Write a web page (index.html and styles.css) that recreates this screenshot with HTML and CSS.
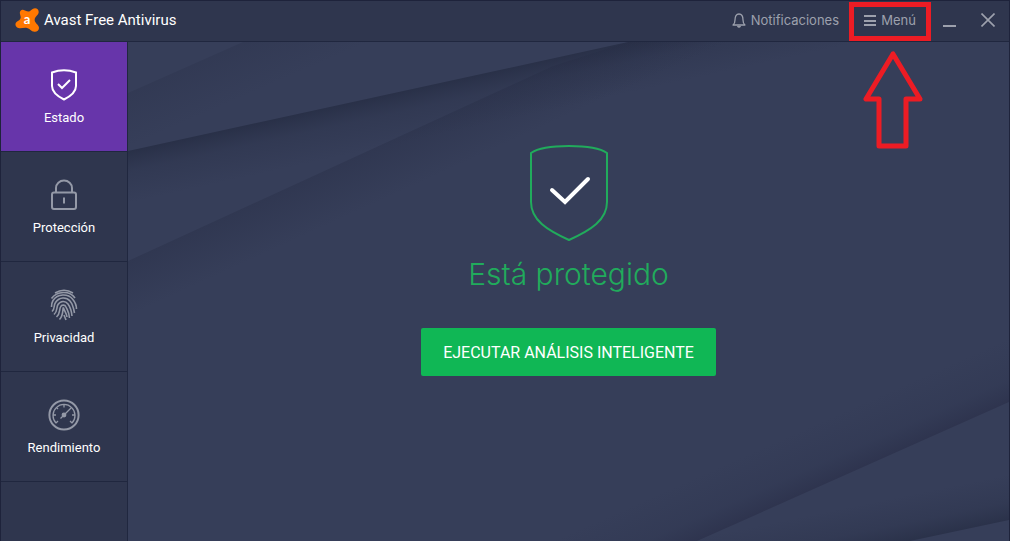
FILE: index.html
```html
<!DOCTYPE html>
<html lang="es">

<head>
  <meta charset="UTF-8">
  <meta name="viewport" content="width=device-width, initial-scale=1.0">
  <title>Avast Free Antivirus</title>
  <link rel="stylesheet" href="styles.css">
</head>

<body>
  <div class="window">
    <header class="titlebar">
      <svg class="logo" viewBox="0 0 24 24" aria-hidden="true">
        <path fill="#ff7800" d="M8 1.800C10 2.200 11.500 3.600 14 3.400C16 3.200 17 .3 20 .3C23.300 .3 24.800 4 22.800 6.400C20.500 9 19.200 10.500 19.800 13C20.300 15.300 24 16.800 24 20C24 22.300 21.600 24.200 19.400 23.800C16 23.300 15 20.600 12 19.900C9 19.300 6 20.800 3.400 20C.3 19-.4 15.800 1.500 14C3.300 12.500 5.600 12 5.700 9.500C5.800 7.500 4.600 6.200 4.900 4.300C5.200 2.600 6.500 1.500 8 1.800Z"/>
        <text class="logo-letter" x="12" y="15.500" text-anchor="middle">a</text>
      </svg>
      <span class="app-name">Avast Free Antivirus</span>

      <div class="title-actions">
        <button type="button" class="title-btn">
          <svg width="14" height="16" viewBox="0 0 14 16" fill="none" stroke="currentColor" stroke-linejoin="round" aria-hidden="true">
            <path d="M1 13C2.500 12 3 10.500 3 8C3 4.500 4.300 2 7 2S11 4.500 11 8C11 10.500 11.500 12 13 13Z" stroke-width="1.300"/>
            <path d="M5.500 14Q7 16 8.500 14" stroke-width="1.300"/>
          </svg>
          Notificaciones
        </button>
        <button type="button" class="title-btn menu-btn">
          <svg width="12" height="12" viewBox="0 0 12 12" stroke="currentColor" stroke-width="2" aria-hidden="true">
            <path d="M0 2H12M0 7H12M0 11H12"/>
          </svg>
          Menú
          <svg class="arrow" viewBox="0 0 60 99" fill="none" stroke="#ed1c24" stroke-width="5" stroke-linejoin="round" aria-hidden="true">
            <path d="M30 3L3 48H16V95H43V48H57Z"/>
          </svg>
        </button>
        <button type="button" class="title-btn min-btn" aria-label="Minimizar">
          <svg width="13" height="14" viewBox="0 0 13 14" stroke="currentColor" stroke-width="2" aria-hidden="true">
            <path d="M0 13H13"/>
          </svg>
        </button>
        <button type="button" class="title-btn close-btn" aria-label="Cerrar">
          <svg width="14" height="14" viewBox="0 0 14 14" stroke="currentColor" stroke-width="1.600" aria-hidden="true">
            <path d="M.5 .5L13.500 13.500M13.500 .5L.5 13.500"/>
          </svg>
        </button>
      </div>
    </header>

    <div class="layout">
      <nav class="sidebar">
        <a href="#estado" class="nav-item active">
          <svg class="nav-icon" viewBox="0 0 32 32" aria-hidden="true">
            <path d="M4 3.500Q16 -1 28 3.500V17C28 23.500 22 27.500 16 30.500C10 27.500 4 23.500 4 17Z"/>
            <path d="M10 15L14 19L22 11"/>
          </svg>
          Estado
        </a>
        <a href="#proteccion" class="nav-item">
          <svg class="nav-icon" viewBox="0 0 32 32" aria-hidden="true">
            <rect x="4" y="13.500" width="24" height="16.500" rx="2"/>
            <path d="M8 13.500V9A8 7.500 0 0 1 24 9V13.500M16 18.500V24.500"/>
          </svg>
          Protección
        </a>
        <a href="#privacidad" class="nav-item">
          <svg class="nav-icon fingerprint" viewBox="0 0 32 32" aria-hidden="true">
            <path d="M7 4Q16 -1.500 25 4"/>
            <path d="M3.500 9.500C9 1.500 22 1.500 27 9"/>
            <path d="M3.500 18C3.500 16 3.500 14 5 11.500C9.500 4.500 20 4.500 24.500 10C27 13 28.500 15 28.500 20"/>
            <path d="M4 22.500C7.500 19.500 5 17 7.500 13.500C11.500 7.500 18.500 8 22 12C25 15.500 25.500 18 26.500 24"/>
            <path d="M6 25.500C10 22 8 19 10 15.500C12.500 11.500 17.500 11.500 20 15C22.500 18.500 23.500 21 24 27"/>
            <path d="M8.500 28C12.500 24.500 11 21 12.500 18C13.500 15.500 17 15.500 18 18C19.500 21.500 21 23 21.500 29"/>
            <path d="M11.500 30.500C15 27 14.500 23 15.300 18.500C16.500 22.500 18.500 24 19 28"/>
            <path d="M16 26L18 31"/>
          </svg>
          Privacidad
        </a>
        <a href="#rendimiento" class="nav-item">
          <svg class="nav-icon" viewBox="0 0 32 32" aria-hidden="true">
            <circle cx="16" cy="16" r="14.600"/>
            <path class="thin" d="M8 24A11 11 0 1 1 24 24M16 5V8.500M5 16H8M27 16H24M8.200 8.200L10 10M8 24L10 22M24 24L22 22"/>
            <path class="thin" d="M12.500 19.500L23.500 8.500"/>
            <circle class="solid" cx="16" cy="16" r="2.400"/>
          </svg>
          Rendimiento
        </a>
      </nav>

      <main class="content">
        <!-- folded paper backdrop -->
        <svg class="backdrop" viewBox="0 0 881 499" preserveAspectRatio="none" aria-hidden="true">
          <defs>
            <linearGradient id="fold1" gradientUnits="userSpaceOnUse" x1="0" y1="51" x2="20" y2="97">
              <stop offset="0" stop-color="#262c44" stop-opacity=".24"/>
              <stop offset="1" stop-color="#262c44" stop-opacity="0"/>
            </linearGradient>
            <linearGradient id="fold2" gradientUnits="userSpaceOnUse" x1="0" y1="109" x2="11" y2="159">
              <stop offset="0" stop-color="#232a40" stop-opacity=".7"/>
              <stop offset=".4" stop-color="#262d44" stop-opacity=".28"/>
              <stop offset="1" stop-color="#262d44" stop-opacity="0"/>
            </linearGradient>
            <linearGradient id="fold3" gradientUnits="userSpaceOnUse" x1="0" y1="219" x2="21" y2="265">
              <stop offset="0" stop-color="#262c44" stop-opacity=".36"/>
              <stop offset="1" stop-color="#262c44" stop-opacity="0"/>
            </linearGradient>
            <linearGradient id="fold4" gradientUnits="userSpaceOnUse" x1="881" y1="360" x2="857" y2="306">
              <stop offset="0" stop-color="#282c46" stop-opacity=".55"/>
              <stop offset=".35" stop-color="#282e48" stop-opacity=".2"/>
              <stop offset="1" stop-color="#282e48" stop-opacity="0"/>
            </linearGradient>
            <linearGradient id="fold5" gradientUnits="userSpaceOnUse" x1="881" y1="478" x2="872" y2="434">
              <stop offset="0" stop-color="#232a40" stop-opacity=".6"/>
              <stop offset=".4" stop-color="#262d44" stop-opacity=".25"/>
              <stop offset="1" stop-color="#262d44" stop-opacity="0"/>
            </linearGradient>
          </defs>
          <path fill="url(#fold1)" d="M0 51L115 0H500L0 109Z"/>
          <path fill="url(#fold2)" d="M0 109L500 0H881V499H0Z"/>
          <path fill="url(#fold3)" d="M0 219L425 24L500 0H881V499H0Z"/>
          <path fill="url(#fold4)" d="M881 360L569 499H0V0H881Z"/>
          <path fill="url(#fold5)" d="M881 478L782 499H569L881 360Z"/>
        </svg>

        <section class="status">
          <svg class="status-icon" viewBox="0 0 80 98" fill="none" aria-hidden="true">
            <path d="M2 9Q12 2 40 2T78 9V58C78 76 62 86 40 96C18 86 2 76 2 58Z" stroke="#21ab5c" stroke-width="2" stroke-linejoin="round"/>
            <path d="M23 46L36 58L59 35" stroke="#fff" stroke-width="4" stroke-linecap="round"/>
          </svg>
          <h1>Está protegido</h1>
          <button type="button" class="scan-btn">EJECUTAR ANÁLISIS INTELIGENTE</button>
        </section>
      </main>
    </div>
  </div>
</body>

</html>
```
FILE: styles.css
```css
* {
  margin: 0;
  padding: 0;
  box-sizing: border-box;
}

body {
  font-family: Roboto, "Liberation Sans", sans-serif;
  background: #363e59;
  color: #fff;
}

.window {
  min-height: 100vh;
  display: flex;
  flex-direction: column;
  border: 1px solid #1e233b;
  border-bottom: none;
}

.titlebar {
  height: 41px;
  display: flex;
  align-items: center;
  padding: 0 0 2px 14px;
  background: #2f364e;
  border-bottom: 1px solid #20273f;
}

.logo {
  width: 24px;
  height: 24px;
  margin-right: 5px;
}

.logo-letter {
  font-family: Lato, sans-serif;
  font-size: 13px;
  font-weight: 700;
  fill: #fff;
}

.app-name {
  font-size: 15px;
  line-height: 20px;
}

.title-actions {
  height: 100%;
  margin-left: auto;
  display: flex;
}

.title-btn {
  display: flex;
  align-items: center;
  justify-content: center;
  gap: 5px;
  background: none;
  border: none;
  color: #9da1ad;
  font-family: Inter, sans-serif;
  font-size: 13px;
  line-height: 20px;
  cursor: pointer;
}

.title-btn:hover {
  color: #fff;
}

.menu-btn {
  position: relative;
  width: 82px;
  margin-left: 10px;
}

.menu-btn::after {
  content: "";
  position: absolute;
  inset: 1px 0 -2px;
  border: 5px solid #ed1c24;
}

.arrow {
  position: absolute;
  top: 50px;
  left: 14px;
  width: 60px;
  height: 99px;
  z-index: 1;
}

.min-btn {
  width: 36px;
}

.close-btn {
  width: 42px;
}

.layout {
  flex: 1;
  display: flex;
}

.sidebar {
  width: 127px;
  background: #2f364e;
  border-right: 1px solid #20273f;
}

.nav-item {
  height: 110px;
  display: flex;
  flex-direction: column;
  align-items: center;
  gap: 7px;
  padding-top: 27px;
  border-bottom: 1px solid #20273f;
  color: #fff;
  font-size: 13px;
  line-height: 20px;
  text-decoration: none;
}

.nav-item.active {
  background: #6735aa;
}

.nav-icon {
  width: 32px;
  height: 32px;
  fill: none;
  stroke: #9499a7;
  stroke-width: 2;
}

.active .nav-icon {
  stroke: #fff;
}

.nav-icon.fingerprint {
  stroke-width: 1.6;
}

.nav-icon .thin {
  stroke-width: 1.3;
}

.nav-icon .solid {
  fill: #9499a7;
  stroke: none;
}

.content {
  flex: 1;
  position: relative;
}

.backdrop {
  position: absolute;
  inset: 0;
  width: 100%;
  height: 100%;
}

.status {
  position: relative;
  display: flex;
  flex-direction: column;
  align-items: center;
  padding: 102px 20px 20px;
}

.status-icon {
  width: 80px;
  height: 98px;
}

.status h1 {
  margin: 12px 0 34px;
  font-family: Inter, sans-serif;
  font-size: 30px;
  font-weight: 300;
  line-height: 40px;
  color: #21ab5c;
}

.scan-btn {
  height: 48px;
  padding: 0 22px;
  background: #10b755;
  border: none;
  border-radius: 2px;
  color: #fff;
  font-family: inherit;
  font-size: 16px;
  cursor: pointer;
}

.scan-btn:hover {
  background: #14c75e;
}
```
